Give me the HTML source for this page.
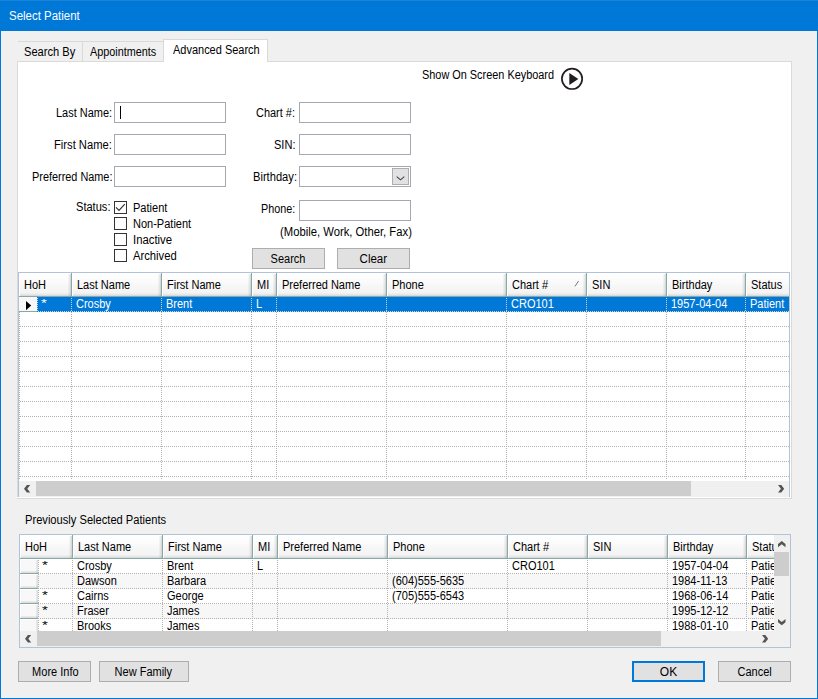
<!DOCTYPE html>
<html><head><meta charset="utf-8"><title>Select Patient</title>
<style>
html,body{margin:0;padding:0;}
body{width:818px;height:699px;overflow:hidden;background:#f0f0f0;position:relative;
 font-family:"Liberation Sans",Arial,sans-serif;font-size:12px;color:#000;}
.abs{position:absolute;}
#win{position:absolute;left:0;top:0;width:816px;height:667px;border:1px solid #0078d7;border-top:31px solid #0078d7;background:#f0f0f0;}
#title{position:absolute;left:9px;top:9px;color:#fff;font-size:12px;line-height:14px;white-space:nowrap;transform:scaleX(.955);transform-origin:0 0;}
.t{position:absolute;white-space:nowrap;line-height:14px;height:14px;transform:scaleX(0.917);transform-origin:0 0;}
.r{transform-origin:100% 0;}
.inp{position:absolute;box-sizing:border-box;height:21px;width:112px;border:1px solid #a5a8b0;background:#fff;}
.cb{position:absolute;box-sizing:border-box;width:13px;height:13px;border:1px solid #333;background:#fff;left:114px;}
.btn{position:absolute;box-sizing:border-box;height:21px;border:1px solid #adadad;background:#e1e1e1;text-align:center;line-height:19px;white-space:nowrap;}
.btn span{display:inline-block;position:relative;top:1px;transform:scaleX(0.917);}
.tab{position:absolute;box-sizing:border-box;background:#f0f0f0;border-top:1px solid #d9d9d9;border-right:1px solid #d9d9d9;}
#page{position:absolute;left:17px;top:61px;width:773px;height:436px;border:1px solid #dadada;background:#fff;}
.grid{position:absolute;box-sizing:border-box;border:1px solid #b1c3d9;background:#fff;overflow:hidden;}
.hc{position:absolute;top:0;height:23px;box-sizing:border-box;
 background:linear-gradient(to bottom,#ffffff 0,#fcfcfc 30%,#f6f6f6 60%,#f3f3f3 100%);
 border-right:1px solid #86a8a7;border-left:1px solid #fff;}
.hc::after{content:"";position:absolute;right:0;top:1px;width:3px;height:22px;background:linear-gradient(to right,rgba(0,0,0,0.02),rgba(0,0,0,0.07) 50%,rgba(0,0,0,0.17));}
.hc::before{content:"";position:absolute;left:0;right:0;bottom:0;height:3px;background:linear-gradient(to bottom,rgba(0,0,0,0.01),rgba(0,0,0,0.05) 50%,rgba(0,0,0,0.13));}
.hline{position:absolute;left:0;top:23px;height:1px;background:#86a8a7;}
.hc span{position:absolute;left:4px;top:5px;line-height:14px;white-space:nowrap;transform:scaleX(0.917);transform-origin:0 0;}
.hl{position:absolute;height:1px;background-image:linear-gradient(to right,#b2b2b2 50%,transparent 50%);background-size:2px 1px;}
.vl{position:absolute;width:1px;background-image:linear-gradient(to bottom,#b2b2b2 50%,transparent 50%);background-size:1px 2px;}
.lt.hl{background-image:linear-gradient(to right,#d4d4d4 50%,transparent 50%);}
.lt.vl{background-image:linear-gradient(to bottom,#d4d4d4 50%,transparent 50%);}
.c{position:absolute;white-space:nowrap;line-height:14px;height:14px;transform:scaleX(0.917);transform-origin:0 0;}
.star{position:absolute;line-height:14px;height:14px;font-size:13px;transform:scale(1.15,.82);transform-origin:0 0;}
.sel{position:absolute;background:#0078d7;}
.w{color:#fff;}
.sb{position:absolute;background:#f0f0f0;}
.th{position:absolute;background:#cdcdcd;}
.rs{position:absolute;left:0;width:18px;height:15px;box-sizing:border-box;background:#f8f8f8;border-top:1px solid #86a8a7;box-shadow:inset 1px 1px 0 #fff;}
.rs::after{content:"";position:absolute;right:0;top:1px;width:2px;height:13px;background:linear-gradient(to right,rgba(0,0,0,0.05),rgba(0,0,0,0.12));}
.rs::before{content:"";position:absolute;left:1px;right:0;bottom:0;height:2px;background:linear-gradient(to bottom,rgba(0,0,0,0.04),rgba(0,0,0,0.12));}
svg{position:absolute;overflow:visible;}
</style></head><body>
<div id="win"></div>
<div class="abs" style="left:0;top:0;width:818px;height:1px;background:#1a84da;"></div>
<div id="title">Select Patient</div>
<div id="page"></div>
<div class="tab" style="left:18px;top:41px;width:65px;height:20px;"></div>
<div class="tab" style="left:83px;top:41px;width:81px;height:20px;"></div>
<div class="tab" style="left:163px;top:39px;width:105px;height:23px;background:#fff;border-left:1px solid #d9d9d9;"></div>
<div class="t" style="left:24.47px;top:45px;transform:scaleX(0.9259);">Search By</div>
<div class="t" style="left:90.40px;top:45px;transform:scaleX(0.9014);">Appointments</div>
<div class="t" style="left:172.60px;top:43px;transform:scaleX(0.9149);">Advanced Search</div>
<div class="t" id="osk" style="left:421.8px;top:68.2px;font-size:12px;transform:scaleX(.908);">Show On Screen Keyboard</div>
<svg style="left:560px;top:67px;" width="24" height="24" viewBox="0 0 24 24"><circle cx="12.05" cy="11.85" r="10.15" fill="#fff" stroke="#231f20" stroke-width="1.7"/><path d="M9.3 5.9 L18.3 11.9 L9.3 18.1 Z" fill="#231f20"/></svg>
<div class="t" style="left:56.29px;top:106px;transform:scaleX(0.9136);">Last Name:</div>
<div class="t" style="left:54.07px;top:138px;transform:scaleX(0.9317);">First Name:</div>
<div class="t" style="left:32.09px;top:170px;transform:scaleX(0.9069);">Preferred Name:</div>
<div class="t" style="left:75.68px;top:200px;transform:scaleX(0.9229);">Status:</div>
<div class="t" style="left:255.69px;top:106px;transform:scaleX(0.9122);">Chart #:</div>
<div class="t" style="left:273.78px;top:138px;transform:scaleX(0.9190);">SIN:</div>
<div class="t" style="left:253.17px;top:170px;transform:scaleX(0.9289);">Birthday:</div>
<div class="t" style="left:261.20px;top:202px;transform:scaleX(0.8972);">Phone:</div>
<div class="inp" style="left:114px;top:102px;"></div>
<div class="inp" style="left:114px;top:134px;"></div>
<div class="inp" style="left:114px;top:166px;"></div>
<div class="inp" style="left:299px;top:102px;"></div>
<div class="inp" style="left:299px;top:134px;"></div>
<div class="inp" style="left:299px;top:166px;"></div>
<div class="inp" style="left:299px;top:200px;"></div>
<div class="abs" style="left:120px;top:106px;width:1px;height:13px;background:#000;"></div>
<div class="abs" style="left:392px;top:168px;width:17px;height:17px;box-sizing:border-box;border:1px solid #adadad;background:#e1e1e1;"></div>
<svg style="left:395.5px;top:175.5px;" width="9" height="6" viewBox="0 0 9 6"><path d="M0.7 0.6 L4.5 3.8 L8.3 0.6" fill="none" stroke="#444" stroke-width="1.1"/></svg>
<div class="cb" style="top:201px;"></div>
<div class="cb" style="top:217px;"></div>
<div class="cb" style="top:233px;"></div>
<div class="cb" style="top:249px;"></div>
<div class="t" style="left:132.78px;top:201px;transform:scaleX(0.9194);">Patient</div>
<div class="t" style="left:132.78px;top:217px;transform:scaleX(0.9177);">Non-Patient</div>
<div class="t" style="left:132.96px;top:233px;transform:scaleX(0.9450);">Inactive</div>
<div class="t" style="left:133.20px;top:249px;transform:scaleX(0.9370);">Archived</div>
<svg style="left:114px;top:201px;" width="13" height="13" viewBox="0 0 13 13"><path d="M2.0 6.3 L5.0 9.3 L10.8 3.2" fill="none" stroke="#333" stroke-width="1.2"/></svg>
<div class="t" style="left:279.76px;top:225px;transform:scaleX(0.9388);">(Mobile, Work, Other, Fax)</div>
<div class="btn" style="left:252px;top:248px;width:73px;"><span>Search</span></div>
<div class="btn" style="left:337px;top:248px;width:73px;"><span style="transform:scaleX(.96)">Clear</span></div>
<div class="grid" style="left:18px;top:272px;width:772px;height:240px;">
<div class="hc" style="left:0;width:53px;"><span>HoH</span></div>
<div class="hc" style="left:53px;width:90px;"><span>Last Name</span></div>
<div class="hc" style="left:143px;width:90px;"><span>First Name</span></div>
<div class="hc" style="left:233px;width:25px;"><span>MI</span></div>
<div class="hc" style="left:258px;width:110px;"><span>Preferred Name</span></div>
<div class="hc" style="left:368px;width:120px;"><span>Phone</span></div>
<div class="hc" style="left:488px;width:80px;"><span>Chart #</span></div>
<div class="hc" style="left:568px;width:80px;"><span>SIN</span></div>
<div class="hc" style="left:648px;width:79px;"><span>Birthday</span></div>
<div class="hc" style="left:727px;width:55px;"><span>Status</span></div>
<div class="hline" style="width:770px;"></div>
<div class="sel" style="left:18px;top:24px;width:752px;height:15px;"></div>
<div class="abs" style="left:0;top:23px;width:18px;height:16px;box-sizing:border-box;background:#f8f8f8;border-top:1px solid #86a8a7;border-bottom:1px solid #86a8a7;"></div>
<svg style="left:7px;top:28px;" width="6" height="10" viewBox="0 0 6 10"><path d="M0 0 L5.2 4.6 L0 9.2 Z" fill="#000"/></svg>
<div class="hl lt" style="left:18px;top:38px;width:752px;background-position:1px 0;"></div>
<div class="hl" style="left:0px;top:53px;width:770px;background-position:1px 0;"></div>
<div class="hl" style="left:0px;top:68px;width:770px;background-position:1px 0;"></div>
<div class="hl" style="left:0px;top:83px;width:770px;background-position:1px 0;"></div>
<div class="hl" style="left:0px;top:98px;width:770px;background-position:1px 0;"></div>
<div class="hl" style="left:0px;top:113px;width:770px;background-position:1px 0;"></div>
<div class="hl" style="left:0px;top:128px;width:770px;background-position:1px 0;"></div>
<div class="hl" style="left:0px;top:143px;width:770px;background-position:1px 0;"></div>
<div class="hl" style="left:0px;top:158px;width:770px;background-position:1px 0;"></div>
<div class="hl" style="left:0px;top:173px;width:770px;background-position:1px 0;"></div>
<div class="hl" style="left:0px;top:188px;width:770px;background-position:1px 0;"></div>
<div class="hl" style="left:0px;top:203px;width:770px;background-position:1px 0;"></div>
<div class="vl lt" style="left:18px;top:24px;height:15px;background-position:0 1px;"></div>
<div class="vl lt" style="left:52px;top:24px;height:15px;background-position:0 1px;"></div>
<div class="vl" style="left:52px;top:39px;height:168px;background-position:0 0px;"></div>
<div class="vl lt" style="left:142px;top:24px;height:15px;background-position:0 1px;"></div>
<div class="vl" style="left:142px;top:39px;height:168px;background-position:0 0px;"></div>
<div class="vl lt" style="left:232px;top:24px;height:15px;background-position:0 1px;"></div>
<div class="vl" style="left:232px;top:39px;height:168px;background-position:0 0px;"></div>
<div class="vl lt" style="left:257px;top:24px;height:15px;background-position:0 1px;"></div>
<div class="vl" style="left:257px;top:39px;height:168px;background-position:0 0px;"></div>
<div class="vl lt" style="left:367px;top:24px;height:15px;background-position:0 1px;"></div>
<div class="vl" style="left:367px;top:39px;height:168px;background-position:0 0px;"></div>
<div class="vl lt" style="left:487px;top:24px;height:15px;background-position:0 1px;"></div>
<div class="vl" style="left:487px;top:39px;height:168px;background-position:0 0px;"></div>
<div class="vl lt" style="left:567px;top:24px;height:15px;background-position:0 1px;"></div>
<div class="vl" style="left:567px;top:39px;height:168px;background-position:0 0px;"></div>
<div class="vl lt" style="left:647px;top:24px;height:15px;background-position:0 1px;"></div>
<div class="vl" style="left:647px;top:39px;height:168px;background-position:0 0px;"></div>
<div class="vl lt" style="left:726px;top:24px;height:15px;background-position:0 1px;"></div>
<div class="vl" style="left:726px;top:39px;height:168px;background-position:0 0px;"></div>
<div class="vl" style="left:0px;top:39px;height:168px;background-position:0 0px;"></div>
<div class="star w" style="left:22.4px;top:24.600000000000023px;">*</div>
<div class="c w" style="left:57px;top:24px;">Crosby</div>
<div class="c w" style="left:147px;top:24px;">Brent</div>
<div class="c w" style="left:237px;top:24px;">L</div>
<div class="c w" style="left:492px;top:24px;">CRO101</div>
<div class="c w" style="left:652px;top:24px;">1957-04-04</div>
<div class="c w" style="left:731px;top:24px;">Patient</div>
<div class="sb" style="left:0;top:208px;width:770px;height:16px;"></div>
<div class="th" style="left:17px;top:208px;width:655px;height:15px;"></div>
<svg style="left:5px;top:211.7px;" width="7" height="8" viewBox="0 0 7 8"><path d="M0 3.75 L2.9 0 L6.2 0 L3.3 3.75 L6.2 7.5 L2.9 7.5 Z" fill="#555"/></svg>
<svg style="left:759px;top:211.7px;" width="7" height="8" viewBox="0 0 7 8"><path d="M6.2 3.75 L3.3 0 L0 0 L2.9 3.75 L0 7.5 L3.3 7.5 Z" fill="#555"/></svg>
<svg style="left:554.5px;top:6.5px;" width="10" height="8" viewBox="0 0 10 8"><path d="M4.5 1.2 L8 6.6 L1.0 6.6" fill="none" stroke="#ffffff" stroke-width="1"/><path d="M1.0 6.4 L4.5 1.0" fill="none" stroke="#777" stroke-width="1"/></svg>
</div>
<div class="abs" style="left:17px;top:497px;width:774px;height:1px;background:#fff;"></div>
<div class="abs" style="left:17px;top:498px;width:775px;height:1px;background:#dadada;"></div>
<div class="abs" style="left:2px;top:499px;width:814px;height:20px;background:#f0f0f0;"></div>
<div class="abs" style="left:790px;top:62px;width:1px;height:436px;background:#fff;"></div>
<div class="t" style="left:24.77px;top:513px;transform:scaleX(0.9278);">Previously Selected Patients</div>
<div class="grid" style="left:19px;top:534px;width:772px;height:114px;">
<div class="hc" style="left:0;width:53px;"><span>HoH</span></div>
<div class="hc" style="left:53px;width:90px;"><span>Last Name</span></div>
<div class="hc" style="left:143px;width:90px;"><span>First Name</span></div>
<div class="hc" style="left:233px;width:25px;"><span>MI</span></div>
<div class="hc" style="left:258px;width:110px;"><span>Preferred Name</span></div>
<div class="hc" style="left:368px;width:120px;"><span>Phone</span></div>
<div class="hc" style="left:488px;width:80px;"><span>Chart #</span></div>
<div class="hc" style="left:568px;width:80px;"><span>SIN</span></div>
<div class="hc" style="left:648px;width:79px;"><span>Birthday</span></div>
<div class="hc" style="left:727px;width:54px;"><span>Status</span></div>
<div class="hline" style="width:770px;"></div>
<div class="rs" style="top:23px;"></div>
<div class="hl" style="left:18px;top:38px;width:736px;background-position:0px 0;"></div>
<div class="abs" style="left:18px;top:39px;width:760px;height:15px;background:#f7f7f7;"></div>
<div class="rs" style="top:38px;"></div>
<div class="hl" style="left:18px;top:53px;width:736px;background-position:0px 0;"></div>
<div class="rs" style="top:53px;"></div>
<div class="hl" style="left:18px;top:68px;width:736px;background-position:0px 0;"></div>
<div class="abs" style="left:18px;top:69px;width:760px;height:15px;background:#f7f7f7;"></div>
<div class="rs" style="top:68px;"></div>
<div class="hl" style="left:18px;top:83px;width:736px;background-position:0px 0;"></div>
<div class="rs" style="top:83px;"></div>
<div class="hl" style="left:18px;top:98px;width:736px;background-position:0px 0;"></div>
<div class="vl" style="left:18px;top:24px;height:72px;background-position:0 1px;"></div>
<div class="vl" style="left:52px;top:24px;height:72px;background-position:0 1px;"></div>
<div class="vl" style="left:142px;top:24px;height:72px;background-position:0 1px;"></div>
<div class="vl" style="left:232px;top:24px;height:72px;background-position:0 1px;"></div>
<div class="vl" style="left:257px;top:24px;height:72px;background-position:0 1px;"></div>
<div class="vl" style="left:367px;top:24px;height:72px;background-position:0 1px;"></div>
<div class="vl" style="left:487px;top:24px;height:72px;background-position:0 1px;"></div>
<div class="vl" style="left:567px;top:24px;height:72px;background-position:0 1px;"></div>
<div class="vl" style="left:647px;top:24px;height:72px;background-position:0 1px;"></div>
<div class="vl" style="left:726px;top:24px;height:72px;background-position:0 1px;"></div>
<div class="star" style="left:22.4px;top:24.6px;">*</div>
<div class="c" style="left:57px;top:24px;">Crosby</div>
<div class="c" style="left:147px;top:24px;">Brent</div>
<div class="c" style="left:237px;top:24px;">L</div>
<div class="c" style="left:492px;top:24px;">CRO101</div>
<div class="c" style="left:652px;top:24px;">1957-04-04</div>
<div class="c" style="left:731px;top:24px;">Patient</div>
<div class="c" style="left:57px;top:39px;">Dawson</div>
<div class="c" style="left:147px;top:39px;">Barbara</div>
<div class="c" style="left:372px;top:39px;">(604)555-5635</div>
<div class="c" style="left:652px;top:39px;">1984-11-13</div>
<div class="c" style="left:731px;top:39px;">Patient</div>
<div class="star" style="left:22.4px;top:54.6px;">*</div>
<div class="c" style="left:57px;top:54px;">Cairns</div>
<div class="c" style="left:147px;top:54px;">George</div>
<div class="c" style="left:372px;top:54px;">(705)555-6543</div>
<div class="c" style="left:652px;top:54px;">1968-06-14</div>
<div class="c" style="left:731px;top:54px;">Patient</div>
<div class="star" style="left:22.4px;top:69.6px;">*</div>
<div class="c" style="left:57px;top:69px;">Fraser</div>
<div class="c" style="left:147px;top:69px;">James</div>
<div class="c" style="left:652px;top:69px;">1995-12-12</div>
<div class="c" style="left:731px;top:69px;">Patient</div>
<div class="star" style="left:22.4px;top:84.6px;">*</div>
<div class="c" style="left:57px;top:84px;">Brooks</div>
<div class="c" style="left:147px;top:84px;">James</div>
<div class="c" style="left:652px;top:84px;">1988-01-10</div>
<div class="c" style="left:731px;top:84px;">Patient</div>
<div class="sb" style="left:0;top:96px;width:770px;height:16px;"></div>
<div class="sb" style="left:754px;top:0;width:16px;height:112px;"></div>
<div class="th" style="left:17px;top:96px;width:624px;height:15px;"></div>
<div class="th" style="left:754px;top:17px;width:15px;height:24px;"></div>
<svg style="left:5px;top:99.70000000000005px;" width="7" height="8" viewBox="0 0 7 8"><path d="M0 3.75 L2.9 0 L6.2 0 L3.3 3.75 L6.2 7.5 L2.9 7.5 Z" fill="#555"/></svg>
<svg style="left:742px;top:99.70000000000005px;" width="7" height="8" viewBox="0 0 7 8"><path d="M6.2 3.75 L3.3 0 L0 0 L2.9 3.75 L0 7.5 L3.3 7.5 Z" fill="#555"/></svg>
<svg style="left:757.8px;top:5.7999999999999545px;" width="8" height="7" viewBox="0 0 8 7"><path d="M3.75 0 L7.5 2.9 L7.5 6.2 L3.75 3.3 L0 6.2 L0 2.9 Z" fill="#555"/></svg>
<svg style="left:757.7px;top:83.79999999999995px;" width="8" height="7" viewBox="0 0 8 7"><path d="M0 0 L3.75 2.9 L7.5 0 L7.5 3.3 L3.75 6.2 L0 3.3 Z" fill="#555"/></svg>
</div>
<div class="btn" style="left:18px;top:661px;width:73px;"><span style="left:0.7px">More Info</span></div>
<div class="btn" style="left:99px;top:661px;width:90px;"><span style="left:-0.9px">New Family</span></div>
<div class="btn" style="left:632px;top:661px;width:73px;border:2px solid #0078d7;line-height:17px;"><span style="transform:scaleX(1.0)">OK</span></div>
<div class="btn" style="left:718px;top:661px;width:73px;"><span>Cancel</span></div>
</body></html>
